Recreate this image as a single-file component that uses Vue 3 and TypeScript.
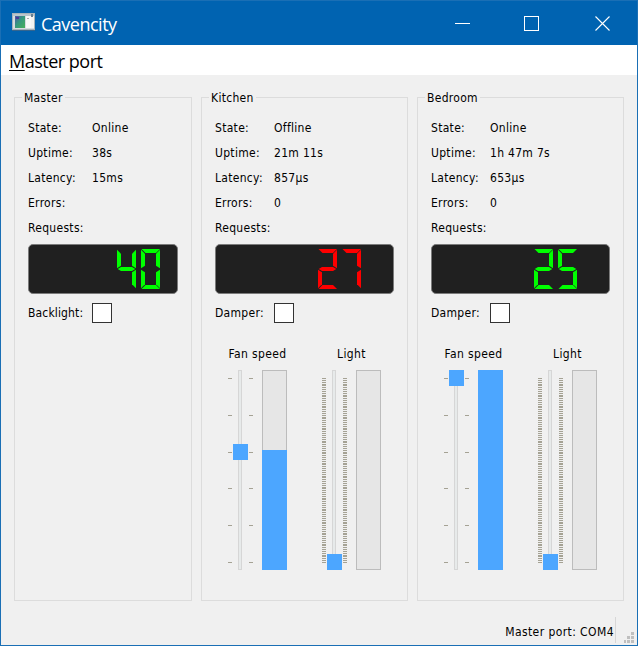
<script setup lang="ts">
interface Panel {
  title: string
  kind: string
  rows: [string, string][]
  digits: string
  offline?: boolean
  toggle: string
  fan?: number
}

const panels: Panel[] = [
  {
    title: 'Master', kind: 'master', digits: '40', toggle: 'Backlight:',
    rows: [['State:', 'Online'], ['Uptime:', '38s'], ['Latency:', '15ms'], ['Errors:', ''], ['Requests:', '']],
  },
  {
    title: 'Kitchen', kind: 'room', digits: '27', offline: true, toggle: 'Damper:', fan: 60,
    rows: [['State:', 'Offline'], ['Uptime:', '21m 11s'], ['Latency:', '857µs'], ['Errors:', '0'], ['Requests:', '']],
  },
  {
    title: 'Bedroom', kind: 'room', digits: '25', toggle: 'Damper:', fan: 100,
    rows: [['State:', 'Online'], ['Uptime:', '1h 47m 7s'], ['Latency:', '653µs'], ['Errors:', '0'], ['Requests:', '']],
  },
]

// Seven-segment shapes on a 19x40 cell
const segments: Record<string, string> = {
  a: '0.5,0 19,0 15,4 4.5,4',
  b: '19,0.8 19,19.2 15,16.8 15,4.8',
  c: '19,20.8 19,39.2 15,35.2 15,23.2',
  d: '0.5,40 19,40 15,36 4.5,36',
  e: '0,20.8 4,23.2 4,35.2 0,39.2',
  f: '0,0.8 4,4.8 4,16.8 0,19.2',
  g: '0.7,20 4,18 15,18 18.3,20 15,22 4,22',
}
const lit: Record<string, string> = { '0': 'abcdef', '2': 'abged', '4': 'fgbc', '5': 'afgcd', '7': 'abc' }

const fanTicks = [8, 45, 82, 118, 155, 192]
const wide = new Set([6, 17, 28, 39, 50, 63, 74, 85, 98, 109, 120, 131, 144, 155, 166, 177])
const lightTicks: { y: number; h: number }[] = []
for (let y = 0; y <= 184; ) {
  const h = wide.has(y) ? 2 : 1
  lightTicks.push({ y: y + 8, h })
  y += h + 1
}
const handleY = (v: number) => Math.round((184 * (100 - v)) / 100)
</script>

<template>
  <div class="window">
    <header class="titlebar">
      <svg class="appicon" width="24" height="20" viewBox="0 0 24 20">
        <defs>
          <linearGradient id="ig" x1="0" y1="0" x2="1" y2="1">
            <stop offset="0" stop-color="#4a55a8" /><stop offset=".45" stop-color="#35987f" /><stop offset="1" stop-color="#48b05a" />
          </linearGradient>
        </defs>
        <rect x="0" y="1" width="23" height="17" fill="#d6dce0" />
        <rect x="0.5" y="1.5" width="22" height="16" fill="none" stroke="#a6b2ba" />
        <rect x="1" y="2" width="21" height="2" fill="#b9c5cc" />
        <rect x="3" y="4" width="10" height="12" fill="url(#ig)" />
        <rect x="4" y="5" width="3" height="2" fill="#483996" />
        <rect x="14" y="4" width="5" height="12" fill="#f8f8f8" />
        <rect x="19" y="4" width="3" height="12" fill="#f3f3f1" />
        <rect x="15" y="6" width="2" height="1" fill="#aaa" />
        <rect x="19" y="2" width="2" height="3" fill="#677f91" />
        <rect x="0" y="18" width="23" height="1" fill="#36658e" />
      </svg>
      <span class="caption">Cavencity</span>
      <svg class="controls" width="156" height="16" viewBox="0 0 156 16" fill="none" stroke="#fff" shape-rendering="crispEdges">
        <path d="M0 7.5H15" />
        <rect x="69.5" y="0.5" width="14" height="14" />
        <path d="M140.5 0.5L154.5 14.5M154.5 0.5L140.5 14.5" stroke-width="1.1" shape-rendering="auto" />
      </svg>
    </header>
    <nav class="menubar"><span class="menu"><span class="key">M</span>aster port</span></nav>
    <main class="body">
      <section v-for="p in panels" :key="p.title" class="group" :class="p.kind">
        <h2 class="legend"><span>{{ p.title }}</span></h2>
        <div class="rows">
          <div v-for="r in p.rows" :key="r[0]" class="row"><span class="name">{{ r[0] }}</span><span>{{ r[1] }}</span></div>
        </div>
        <div class="lcd" :class="{ offline: p.offline }">
          <svg width="43" height="40" viewBox="0 0 43 40">
            <g v-for="(d, i) in p.digits.split('')" :key="i" :transform="`translate(${i * 24} 0)`">
              <polygon v-for="s in lit[d].split('')" :key="s" :points="segments[s]" />
            </g>
          </svg>
        </div>
        <div class="toggle"><span class="name">{{ p.toggle }}</span><span class="box"></span></div>
        <div v-if="p.fan !== undefined" class="sliders">
          <div class="control">
            <div class="heading">Fan speed</div>
            <svg width="59" height="200" viewBox="0 0 59 200" shape-rendering="crispEdges">
              <rect class="groove" x="10.5" y="0.5" width="3" height="199" />
              <g class="ticks">
                <template v-for="y in fanTicks" :key="y">
                  <rect x="0" :y="y" width="4" height="1" /><rect x="21" :y="y" width="4" height="1" />
                </template>
              </g>
              <rect class="blue" x="5" :y="handleY(p.fan)" width="15" height="16" />
              <rect class="meter" x="34.5" y="0.5" width="24" height="199" />
              <rect class="blue" x="34" :y="200 - p.fan * 2" width="25" :height="p.fan * 2" />
            </svg>
          </div>
          <div class="control">
            <div class="heading">Light</div>
            <svg width="59" height="200" viewBox="0 0 59 200" shape-rendering="crispEdges">
              <rect class="groove" x="10.5" y="0.5" width="3" height="199" />
              <g class="ticks">
                <template v-for="t in lightTicks" :key="t.y">
                  <rect x="0" :y="t.y" width="4" :height="t.h" /><rect x="21" :y="t.y" width="4" :height="t.h" />
                </template>
              </g>
              <rect class="blue" x="5" y="184" width="15" height="16" />
              <rect class="meter" x="34.5" y="0.5" width="24" height="199" />
            </svg>
          </div>
        </div>
      </section>
    </main>
    <footer class="status">
      <span class="port">Master port: COM4</span>
      <svg width="10" height="11" viewBox="0 0 10 11" fill="#bfbfbf" shape-rendering="crispEdges">
        <rect x="7" y="0" width="3" height="3" /><rect x="3" y="4" width="3" height="3" /><rect x="7" y="4" width="3" height="3" />
        <rect x="0" y="8" width="2" height="3" /><rect x="3" y="8" width="3" height="3" /><rect x="7" y="8" width="3" height="3" />
      </svg>
    </footer>
  </div>
</template>

<style>
body { margin: 0; overflow: hidden; }
</style>

<style scoped>
* { box-sizing: border-box; }
.window {
  width: 638px; height: 646px; display: flex; flex-direction: column;
  border: 1px solid #1a6fb5; background: #f0f0f0; color: #000;
  font-family: 'DejaVu Sans Condensed', 'DejaVu Sans', sans-serif; font-size: 12px; font-stretch: condensed;
  letter-spacing: 0.3px; white-space: nowrap;
}
.titlebar { height: 44px; background: #0063b1; display: flex; align-items: center; padding-left: 11px; flex: none; }
.appicon { margin-top: -3px; }
.caption { font: 18px/24px 'Open Sans', 'Noto Sans', sans-serif; letter-spacing: -0.5px; color: #fff; margin-left: 5px; margin-top: 1px; }
.controls { margin-left: auto; margin-right: 26px; margin-top: 1px; }
.menubar { height: 30px; background: #fff; flex: none; padding: 3px 0 0 8px; }
.menu { font: 18px/26px 'Open Sans', 'Noto Sans', sans-serif; letter-spacing: -0.5px; }
.key { text-decoration: underline; text-decoration-thickness: 1px; text-underline-offset: 2px; text-decoration-skip-ink: none; }
.body { display: flex; gap: 9px; padding: 22px 0 0 13px; height: 526px; flex: none; }
.group { border: 1px solid #dcdcdc; height: 504px; padding: 0 13px; }
.master { width: 178px; }
.room { width: 207px; }
.legend { margin: -9px 0 0 -6px; font-size: 12px; font-weight: normal; line-height: 18px; height: 18px; }
.legend span { background: #f0f0f0; padding: 0 2px; display: inline-block; }
.rows { margin-top: 9px; }
.row { height: 25px; line-height: 25px; display: flex; }
.name { width: 59px; flex: none; }
.master .name { width: 64px; }
.lcd {
  height: 50px; margin-top: 3px; border: 1px solid #7b7b7b; border-radius: 5px; background: #202020;
  display: flex; justify-content: flex-end; padding: 4px 32px 0 0; fill: #0f0;
}
.master .lcd { padding-right: 17px; width: 150px; }
.room .lcd { width: 179px; }
.lcd.offline { fill: #f00; }
.toggle { display: flex; align-items: center; height: 20px; margin-top: 9px; }
.master .toggle .name { letter-spacing: 0.15px; }
.box { width: 20px; height: 20px; border: 1px solid #333; background: #fff; }
.sliders { display: flex; gap: 35px; padding: 21px 0 0 13px; }
.control { width: 59px; }
.heading { height: 26px; line-height: 20px; text-align: center; letter-spacing: 0.4px; }
.control svg { display: block; }
.groove { fill: #e7eaea; stroke: #d6d6d6; }
.ticks { fill: #a5a294; }
.blue { fill: #4ca6ff; }
.meter { fill: #e6e6e6; stroke: #bcbcbc; }
.status { display: flex; align-items: flex-start; justify-content: flex-end; padding: 16px 3px 0 0; flex: 1; }
.port { height: 26px; line-height: 30px; border-right: 1px solid #d7d7d7; padding-right: 1px; margin-right: 8px; letter-spacing: 0.42px; }
.status svg { margin-top: 15px; }
</style>
